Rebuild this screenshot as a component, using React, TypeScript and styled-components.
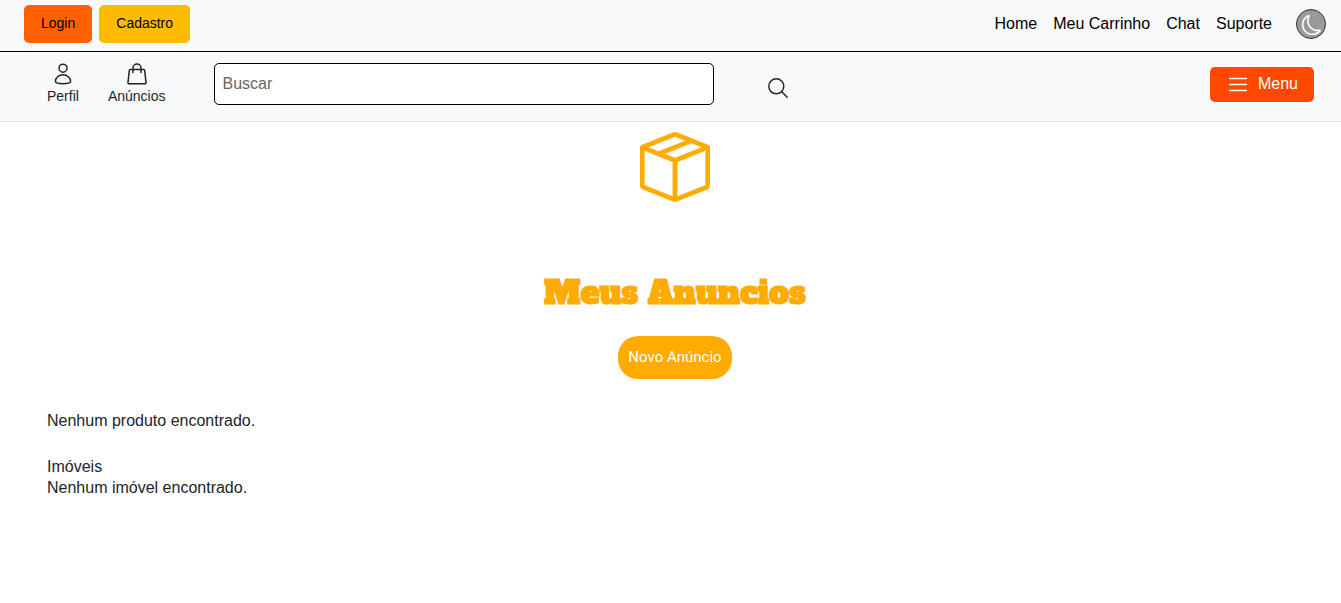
import React from 'react';
import styled, { createGlobalStyle } from 'styled-components';
import { BsBoxSeam, BsMoon } from 'react-icons/bs';

const GlobalStyle = createGlobalStyle`
  *, *::before, *::after { box-sizing: border-box; }
  body {
    margin: 0;
    background: #fff;
    color: #212529;
    font-family: "Liberation Sans", Arial, sans-serif;
    font-size: 16px;
    line-height: 21px;
  }
  p, h1, h2 { margin: 0; }
`;

const TopBar = styled.header`
  display: flex;
  justify-content: space-between;
  align-items: flex-start;
  height: 52px;
  padding: 5px 15px 0 24px;
  background: #f8f9fb;
  border-bottom: 1px solid #000;
`;

const Group = styled.div`
  display: flex;
  gap: 7px;
`;

const AccountButton = styled.button<{ $color: string }>`
  height: 38px;
  padding: 0 17px 2px;
  border: 0;
  border-radius: 5px;
  background: ${(p) => p.$color};
  color: #000;
  font: 14px "Liberation Sans", Arial, sans-serif;
  cursor: pointer;
`;

const Nav = styled.nav`
  display: flex;
  align-items: center;
  gap: 16px;
  height: 38px;
`;

const NavLink = styled.a`
  padding-bottom: 2px;
  color: #000;
  text-decoration: none;
`;

const ThemeButton = styled.button`
  display: grid;
  place-items: center;
  width: 30px;
  height: 30px;
  margin-left: 8px;
  padding: 2px 0 0 2px;
  border: 1px solid #333;
  border-radius: 50%;
  background: #999;
  color: #fff;
  cursor: pointer;
`;

const ToolBar = styled.div`
  display: flex;
  align-items: flex-start;
  height: 70px;
  padding: 11px 27px 0 47px;
  background: #f8f9fb;
  border-bottom: 1px solid #dee2e6;
`;

const Shortcuts = styled.nav`
  display: flex;
  gap: 29px;
  margin-right: 48px;
`;

const Shortcut = styled.a`
  display: flex;
  flex-direction: column;
  align-items: center;
  gap: 1px;
  color: #212529;
  font-size: 14px;
  text-decoration: none;
`;

const SearchForm = styled.form`
  display: flex;
  align-items: flex-start;
  gap: 54px;
`;

const SearchInput = styled.input`
  width: 500px;
  height: 42px;
  padding: 0 8px;
  border: 1px solid #000;
  border-radius: 5px;
  background: #fff;
  color: #212529;
  font: 16px "Liberation Sans", Arial, sans-serif;
  &::placeholder { color: #666; opacity: 1; }
`;

const IconButton = styled.button`
  margin-top: 15px;
  padding: 0;
  border: 0;
  background: none;
  color: #212529;
  line-height: 0;
  cursor: pointer;
`;

const MenuButton = styled.button`
  display: flex;
  align-items: center;
  gap: 10px;
  height: 35px;
  margin: 4px 0 0 auto;
  padding: 0 16px 1px 18px;
  border: 0;
  border-radius: 5px;
  background: #ff4800;
  color: #fff;
  font: 16px "Liberation Sans", Arial, sans-serif;
  cursor: pointer;
`;

const Main = styled.main`
  padding: 10px 38px 40px 47px;
`;

const Hero = styled.section`
  display: flex;
  flex-direction: column;
  align-items: center;
  color: #ffab00;
`;

const Title = styled.h1`
  margin: 71px 0 23px;
  font: 700 32px/40px "Alfa Slab One", "DejaVu Serif", serif;
`;

const NewAdLink = styled.a`
  padding: 11px 10px;
  border-radius: 20px;
  background: #ffab00;
  color: #fff;
  font-family: Roboto, sans-serif;
  font-size: 15px;
  text-decoration: none;
`;

const Results = styled.section`
  margin-top: 31px;
`;

const Section = styled.section`
  margin-top: 25px;
`;

const SectionTitle = styled.h2`
  font-size: 16px;
  font-weight: 400;
`;

const line = {
  fill: 'none',
  stroke: 'currentColor',
  strokeLinecap: 'round' as const,
  strokeLinejoin: 'round' as const,
};

const PersonIcon = () => (
  <svg width="22" height="22" viewBox="0 0 22 22" strokeWidth="1.5" {...line} aria-hidden="true">
    <circle cx="11" cy="5.2" r="4" />
    <path d="M11 11.700c-4.300 0-7.600 3.200-7.600 6.600 0 1.700 3 2.400 7.600 2.400s7.600-.7 7.600-2.400c0-3.400-3.300-6.600-7.600-6.600Z" />
  </svg>
);

const BagIcon = () => (
  <svg width="22" height="22" viewBox="0 0 22 22" strokeWidth="1.5" {...line} aria-hidden="true">
    <path d="M4.300 6.500h13.400q.9 0 1 .9l1.300 12.300q.1 1-.9 1H2.900q-1 0-.9-1L3.300 7.400q.1-.9 1-.9Z" />
    <path d="M7 9.600V5a4 4 0 0 1 8 0v4.600" />
  </svg>
);

const SearchIcon = () => (
  <svg width="20" height="20" viewBox="0 0 20 20" strokeWidth="1.5" {...line} aria-hidden="true">
    <circle cx="8.300" cy="8.300" r="7.500" />
    <path d="m13.800 13.800 5.400 5.400" />
  </svg>
);

const MenuIcon = () => (
  <svg width="20" height="16" viewBox="0 0 20 16" strokeWidth="1.300" {...line} aria-hidden="true">
    <path d="M1.500 2.500h17M1.500 8.500h17M1.500 14.500h17" />
  </svg>
);

const links = ['Home', 'Meu Carrinho', 'Chat', 'Suporte'];

export default function App() {
  return (
    <>
      <GlobalStyle />
      <TopBar>
        <Group>
          <AccountButton $color="#ff6000">Login</AccountButton>
          <AccountButton $color="#ffbb00">Cadastro</AccountButton>
        </Group>
        <Nav>
          {links.map((label) => (
            <NavLink key={label} href="#">{label}</NavLink>
          ))}
          <ThemeButton aria-label="Tema escuro">
            <BsMoon size={20} stroke="#fff" strokeWidth={0.3} />
          </ThemeButton>
        </Nav>
      </TopBar>
      <ToolBar>
        <Shortcuts>
          <Shortcut href="#"><PersonIcon />Perfil</Shortcut>
          <Shortcut href="#"><BagIcon />Anúncios</Shortcut>
        </Shortcuts>
        <SearchForm onSubmit={(e) => e.preventDefault()}>
          <SearchInput type="search" placeholder="Buscar" aria-label="Buscar" />
          <IconButton type="submit" aria-label="Pesquisar"><SearchIcon /></IconButton>
        </SearchForm>
        <MenuButton><MenuIcon />Menu</MenuButton>
      </ToolBar>
      <Main>
        <Hero>
          <BsBoxSeam size={70} stroke="currentColor" strokeWidth={0.1} aria-hidden="true" />
          <Title>Meus Anuncios</Title>
          <NewAdLink href="#">Novo Anúncio</NewAdLink>
        </Hero>
        <Results>
          <p>Nenhum produto encontrado.</p>
          <Section>
            <SectionTitle>Imóveis</SectionTitle>
            <p>Nenhum imóvel encontrado.</p>
          </Section>
        </Results>
      </Main>
    </>
  );
}
